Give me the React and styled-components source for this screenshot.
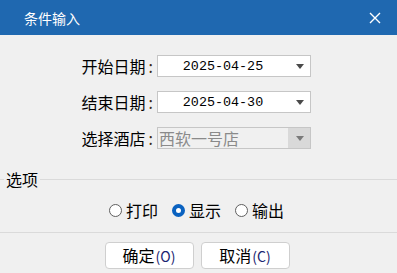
import React from 'react'
import styled, { createGlobalStyle } from 'styled-components'

const Global = createGlobalStyle`
  html, body { margin: 0; padding: 0; background: #f0f0f0; overflow: hidden; }
  body { font-family: "Noto Sans CJK SC", "Microsoft YaHei", sans-serif; }
`

const Dialog = styled.div`
  width: 397px;
  height: 273px;
  background: #f0f0f0;
  display: flex;
  flex-direction: column;
`

const TitleBar = styled.div`
  height: 35px;
  flex: none;
  background: #1f68b0;
  color: #fff;
  display: flex;
  align-items: center;
  justify-content: space-between;
  padding: 0 16px 0 24px;
  font-size: 14px;
`

const Close = styled.svg`
  width: 12px;
  height: 12px;
`

const Form = styled.div`
  display: grid;
  grid-template-columns: 157px 154px;
  row-gap: 14px;
  margin-top: 20px;
  align-items: center;
`

const Label = styled.div`
  justify-self: end;
  padding-right: 4px;
  font-size: 16px;
  line-height: 22px;
  color: #000;
  white-space: nowrap;
`

const Colon = styled.span`
  margin-left: 3px;
  color: #3a2a10;
`

const Combo = styled.div`
  height: 22px;
  box-sizing: border-box;
  border: 1px solid #c6c6c6;
  background: ${p => (p.$disabled ? '#f0f0f0' : '#fff')};
  display: flex;
  align-items: stretch;
`

const Value = styled.div`
  flex: 1;
  display: flex;
  align-items: center;
  justify-content: ${p => (p.$left ? 'flex-start' : 'center')};
  padding-left: ${p => (p.$left ? '1px' : '0')};
  font-family: ${p => (p.$left ? '"Noto Sans CJK SC", sans-serif' : '"Liberation Mono", monospace')};
  font-size: ${p => (p.$left ? '16px' : '13.4px')};
  color: ${p => (p.$left ? '#8a8a8a' : '#000')};
  white-space: nowrap;
`

const Arrow = styled.div`
  width: 22px;
  display: flex;
  align-items: center;
  justify-content: center;
  background: ${p => (p.$disabled ? '#d9d9d9' : 'transparent')};
  &::after {
    content: '';
    border-left: 4px solid transparent;
    border-right: 4px solid transparent;
    border-top: 5px solid ${p => (p.$disabled ? '#7a7a7a' : '#4a4a4a')};
    margin-left: 2px;
  }
`

const Group = styled.fieldset`
  margin: 22px -2px 0 -2px;
  padding: 13px 0 12px 0;
  border: 1px solid #dadada;
  border-left: none;
  border-right: none;
  display: flex;
  justify-content: center;
`

const Legend = styled.legend`
  font-size: 16px;
  line-height: 16px;
  padding: 0 2px;
  margin-left: 6px;
  color: #000;
`

const Options = styled.div`
  display: flex;
  height: 20px;
  gap: 14px;
  margin-left: -4px;
`

const Option = styled.label`
  display: flex;
  align-items: center;
  gap: 4px;
  font-size: 16px;
  line-height: 20px;
  color: #000;
`

const Dot = styled.span`
  width: 13px;
  height: 13px;
  box-sizing: border-box;
  border-radius: 50%;
  border: ${p => (p.$on ? '4px solid #0a62c0' : '1px solid #5f5f5f')};
  background: #fff;
`

const Buttons = styled.div`
  display: flex;
  justify-content: center;
  gap: 7px;
  margin-top: 9px;
  margin-left: -3px;
`

const Button = styled.button`
  width: 89px;
  height: 27px;
  background: #fff;
  border: 1px solid #cfcfcf;
  border-radius: 4px;
  font-family: "Noto Sans CJK SC", sans-serif;
  font-size: 16px;
  line-height: 25px;
  color: #000;
  padding: 0;
  span { color: #1a2470; font-size: 14px; margin-left: 1px; }
`

export default function App() {
  return (
    <Dialog>
      <Global />
      <TitleBar>
        <span>条件输入</span>
        <Close viewBox="0 0 12 12">
          <path d="M1 1 L11 11 M11 1 L1 11" stroke="#fff" strokeWidth="1.4" />
        </Close>
      </TitleBar>
      <Form>
        <Label>开始日期<Colon>:</Colon></Label>
        <Combo>
          <Value>2025-04-25</Value>
          <Arrow />
        </Combo>
        <Label>结束日期<Colon>:</Colon></Label>
        <Combo>
          <Value>2025-04-30</Value>
          <Arrow />
        </Combo>
        <Label>选择酒店<Colon>:</Colon></Label>
        <Combo $disabled>
          <Value $left>西软一号店</Value>
          <Arrow $disabled />
        </Combo>
      </Form>
      <Group>
        <Legend>选项</Legend>
        <Options>
          <Option><Dot />打印</Option>
          <Option><Dot $on />显示</Option>
          <Option><Dot />输出</Option>
        </Options>
      </Group>
      <Buttons>
        <Button>确定<span>(O)</span></Button>
        <Button>取消<span>(C)</span></Button>
      </Buttons>
    </Dialog>
  )
}
